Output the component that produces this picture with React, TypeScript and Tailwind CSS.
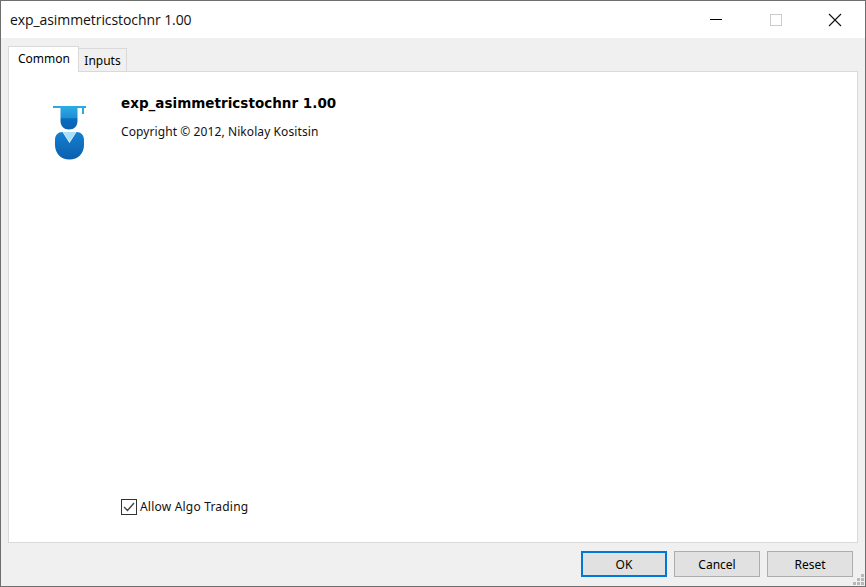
import { useState } from "react";

const uiFont = "font-['Noto_Sans',sans-serif]";

function LogoIcon() {
  return (
    <svg width="36" height="56" viewBox="0 0 36 56" className="block">
      <defs>
        <linearGradient id="head" x1="0" y1="0" x2="0" y2="1">
          <stop offset="0" stopColor="#2da7e4" />
          <stop offset="0.45" stopColor="#1f8fd6" />
          <stop offset="0.5" stopColor="#0b6cbd" />
          <stop offset="1" stopColor="#0a62b2" />
        </linearGradient>
        <linearGradient id="body" x1="0" y1="0" x2="0" y2="1">
          <stop offset="0" stopColor="#1580cf" />
          <stop offset="1" stopColor="#0a5fae" />
        </linearGradient>
      </defs>
      <rect x="1" y="1" width="33" height="2" fill="#29abe2" />
      <rect x="30" y="3" width="2" height="6" fill="#29abe2" />
      <path d="M8.500 3h17v13C25.500 21 22 24.500 17 24.500S8.500 21 8.500 16z" fill="url(#head)" />
      <path d="M11 27h13l-6.500 10z" fill="#a9e0f7" />
      <path d="M10.500 27 C6 27 3 30 3 35 V40 C3 48.500 9 54.500 17.500 54.500 C26 54.500 32 48.500 32 40 V35 C32 30 29 27 24.500 27 L17.500 38z" fill="url(#body)" />
    </svg>
  );
}

function DialogButton({ label, primary }: { label: string; primary?: boolean }) {
  return (
    <button
      type="button"
      className={`h-[26px] w-[86px] bg-[#e1e1e1] pt-px text-[12px] text-black ${uiFont} ${
        primary ? "border-2 border-[#0078d7]" : "border border-[#adadad]"
      }`}
    >
      {label}
    </button>
  );
}

export default function App() {
  const [algo, setAlgo] = useState(true);

  return (
    <div className="flex h-[587px] w-[866px] flex-col overflow-hidden bg-[#f0f0f0]">
      <div className="flex h-[587px] flex-col border border-[#6e6e6e]">
        {/* Title bar */}
        <div className="flex h-[37px] shrink-0 items-center justify-between bg-white pl-[9px]">
          <span className="font-['Open_Sans',sans-serif] text-[14px] tracking-[-0.08px] text-[#111]">
            exp_asimmetricstochnr 1.00
          </span>
          <div className="flex h-full items-center">
            <div className="flex w-[46px] justify-center">
              <div className="h-px w-[12px] bg-black" />
            </div>
            <div className="ml-[14px] flex w-[46px] justify-center">
              <div className="size-[12px] border border-[#cccccc]" />
            </div>
            <div className="ml-[13px] mr-[7px] flex w-[46px] justify-center">
              <svg width="14" height="14" viewBox="0 0 14 14">
                <path d="M1 1l12 12M13 1L1 13" stroke="#111" strokeWidth="1.100" fill="none" />
              </svg>
            </div>
          </div>
        </div>

        {/* Tabs */}
        <div className={`flex h-[33px] shrink-0 items-end pl-[7px] text-[12px] text-black ${uiFont}`}>
          <div className="relative z-10 -mb-px flex h-[26px] w-[71px] items-start justify-center border border-b-0 border-[#d9d9d9] bg-white pl-px pt-[3px]">
            Common
          </div>
          <div className="flex h-[23px] w-[48px] items-center justify-center border border-b-0 border-l-0 border-[#d9d9d9] bg-[#f0f0f0] pt-[1px]">
            Inputs
          </div>
        </div>

        {/* Panel */}
        <div className={`mx-[7px] flex min-h-0 flex-1 flex-col border border-[#d9d9d9] bg-white text-[#111] ${uiFont}`}>
          <div className="flex flex-1 pl-[43px] pt-[19px]">
            <div className="w-[69px] shrink-0 pt-[14px]">
              <LogoIcon />
            </div>
            <div>
              <div className="font-['DejaVu_Sans',sans-serif] text-[13.5px] font-bold leading-[24px] tracking-[0.02px] text-black">
                exp_asimmetricstochnr 1.00
              </div>
              <div className="mt-[8px] text-[12px] leading-[18px] tracking-[0.09px]">
                Copyright © 2012, Nikolay Kositsin
              </div>
            </div>
          </div>
          <label className="mb-[27px] ml-[112px] flex cursor-default items-center gap-[3px] text-[12px] leading-[16px] tracking-[0.2px]">
            <input
              type="checkbox"
              checked={algo}
              onChange={(e) => setAlgo(e.target.checked)}
              className="sr-only"
            />
            <span className="flex size-[16px] items-center justify-center border border-[#333] bg-white">
              {algo && (
                <svg width="12" height="10" viewBox="0 0 12 10">
                  <path d="M1 5l3.500 3.500L11 1" stroke="#444" strokeWidth="1.400" fill="none" />
                </svg>
              )}
            </span>
            Allow Algo Trading
          </label>
        </div>

        {/* Footer buttons */}
        <div className="relative flex h-[43px] shrink-0 items-start justify-end gap-[7px] pr-[12px] pt-[8px]">
          <DialogButton label="OK" primary />
          <DialogButton label="Cancel" />
          <DialogButton label="Reset" />
          <svg width="12" height="12" viewBox="0 0 12 12" className="absolute bottom-0 right-0">
            <g fill="#b8b8b8">
              <rect x="8" y="0" width="3" height="3" />
              <rect x="4" y="4" width="3" height="3" />
              <rect x="8" y="4" width="3" height="3" />
              <rect x="0" y="8" width="3" height="3" />
              <rect x="4" y="8" width="3" height="3" />
              <rect x="8" y="8" width="3" height="3" />
            </g>
          </svg>
        </div>
      </div>
    </div>
  );
}
